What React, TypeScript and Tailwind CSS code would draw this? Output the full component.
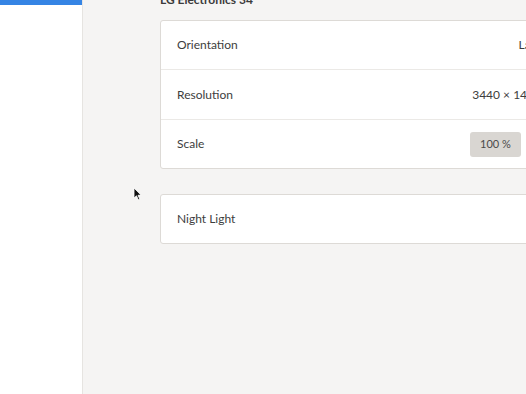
const rowText = 'text-[12px] text-[#3d3d3d]'

export default function App() {
  return (
    <div className="relative flex h-[394px] w-[526px] overflow-hidden bg-[#f5f4f3] font-['Lato',sans-serif]">
      {/* Sidebar */}
      <div className="w-[83px] shrink-0 border-r border-[#e6e4e1] bg-white">
        <div className="h-[5px] bg-[#3584e4]" />
      </div>

      {/* Main */}
      <div className="flex-1 overflow-hidden pl-[77px]">
        <div className="mt-[-9px] mb-[11px] text-[12px] leading-[18px] font-bold text-[#3b3b3b]">LG Electronics 34&quot;</div>

        <div className="w-[460px] rounded-[3px] border border-[#dddad6] bg-white">
          <div className="flex h-[49px] items-center border-b border-[#ebe9e6] px-[16px]">
            <span className={`flex-1 ${rowText}`}>Orientation</span>
            <span className={`mr-[29px] ${rowText}`}>Landscape</span>
          </div>
          <div className="flex h-[50px] items-center border-b border-[#ebe9e6] px-[16px]">
            <span className={`flex-1 ${rowText}`}>Resolution</span>
            <span className={`mr-[62px] ${rowText}`}>3440 × 1440</span>
          </div>
          <div className="flex h-[48px] items-center px-[16px]">
            <span className={`flex-1 ${rowText}`}>Scale</span>
            <span className="mr-[82px] flex h-[25px] w-[51px] items-center justify-center rounded-[3px] bg-[#d9d6d2] text-[11px] text-[#4a4a4a]">
              100 %
            </span>
          </div>
        </div>

        <div className="mt-[25px] flex h-[50px] w-[460px] items-center rounded-[3px] border border-[#dddad6] bg-white px-[16px]">
          <span className={rowText}>Night Light</span>
        </div>
      </div>

      {/* Mouse pointer */}
      <svg className="absolute left-[133px] top-[187px]" width="9" height="14" viewBox="0 0 9 14">
        <path d="M1 1 L1 11 L3.5 8.8 L5.3 12.8 L6.8 12.1 L5 8.3 L8 8.1 Z" fill="#111" stroke="#fff" strokeWidth="0.8" />
      </svg>
    </div>
  )
}
